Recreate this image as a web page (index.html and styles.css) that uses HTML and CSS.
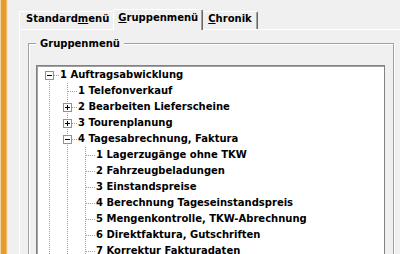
FILE: index.html
```html
<!DOCTYPE html>
<html lang="de">
<head>
  <meta charset="UTF-8">
  <title>Gruppenmenü</title>
  <link rel="stylesheet" href="styles.css">
</head>
<body>
  <div class="app">
    <div class="edge"></div>

    <div class="main">
      <div class="tabs">
        <div class="tab">Standard<u>m</u>enü</div>
        <div class="tab active"><u>G</u>ruppenmenü</div>
        <div class="tab"><u>C</u>hronik</div>
      </div>

      <div class="panel">
        <fieldset class="group">
          <legend>Gruppenmenü</legend>

          <div class="list">
            <div class="row">
              <span class="g root">
                <svg class="box" width="9" height="9" viewBox="0 0 9 9"><rect x=".5" y=".5" width="8" height="8" fill="#fff" stroke="#919191"/><path d="M2 4.5h5" stroke="#000"/></svg>
              </span>
              <span class="label">1 Auftragsabwicklung</span>
            </div>
            <div class="row">
              <span class="g pipe"></span><span class="g tee"></span>
              <span class="label">1 Telefonverkauf</span>
            </div>
            <div class="row">
              <span class="g pipe"></span>
              <span class="g tee">
                <svg class="box" width="9" height="9" viewBox="0 0 9 9"><rect x=".5" y=".5" width="8" height="8" fill="#fff" stroke="#919191"/><path d="M2 4.5h5M4.5 2v5" stroke="#000"/></svg>
              </span>
              <span class="label">2 Bearbeiten Lieferscheine</span>
            </div>
            <div class="row">
              <span class="g pipe"></span>
              <span class="g tee">
                <svg class="box" width="9" height="9" viewBox="0 0 9 9"><rect x=".5" y=".5" width="8" height="8" fill="#fff" stroke="#919191"/><path d="M2 4.5h5M4.5 2v5" stroke="#000"/></svg>
              </span>
              <span class="label">3 Tourenplanung</span>
            </div>
            <div class="row">
              <span class="g pipe"></span>
              <span class="g tee">
                <svg class="box" width="9" height="9" viewBox="0 0 9 9"><rect x=".5" y=".5" width="8" height="8" fill="#fff" stroke="#919191"/><path d="M2 4.5h5" stroke="#000"/></svg>
              </span>
              <span class="label">4 Tagesabrechnung, Faktura</span>
            </div>
            <div class="row">
              <span class="g pipe"></span><span class="g pipe"></span><span class="g tee"></span>
              <span class="label">1 Lagerzugänge ohne TKW</span>
            </div>
            <div class="row">
              <span class="g pipe"></span><span class="g pipe"></span><span class="g tee"></span>
              <span class="label">2 Fahrzeugbeladungen</span>
            </div>
            <div class="row">
              <span class="g pipe"></span><span class="g pipe"></span><span class="g tee"></span>
              <span class="label">3 Einstandspreise</span>
            </div>
            <div class="row">
              <span class="g pipe"></span><span class="g pipe"></span><span class="g tee"></span>
              <span class="label">4 Berechnung Tageseinstandspreis</span>
            </div>
            <div class="row">
              <span class="g pipe"></span><span class="g pipe"></span><span class="g tee"></span>
              <span class="label">5 Mengenkontrolle, TKW-Abrechnung</span>
            </div>
            <div class="row">
              <span class="g pipe"></span><span class="g pipe"></span><span class="g tee"></span>
              <span class="label">6 Direktfaktura, Gutschriften</span>
            </div>
            <div class="row">
              <span class="g pipe"></span><span class="g pipe"></span><span class="g tee"></span>
              <span class="label">7 Korrektur Fakturadaten</span>
            </div>
          </div>
        </fieldset>
      </div>
    </div>
  </div>
</body>
</html>
```

FILE: styles.css
```css
* {
  box-sizing: border-box;
}

body {
  margin: 0;
  background: #f0f0f0;
  font-family: "DejaVu Sans", sans-serif;
  font-size: 10px;
  font-weight: bold;
  color: #000;
  overflow: hidden;
}

.app {
  display: flex;
  height: 254px;
}

/* orange window edge on the left */
.edge {
  flex: none;
  width: 8px;
  background: linear-gradient(to right, #f1d3a2 0 1px, #e69b2e 1px 6px, #f0bb66 6px 7px, #f7e3c4 7px 8px);
}

.main {
  flex: none;
  width: 400px;
  padding: 9px 0 0 11px;
}

/* Tabs */
.tabs {
  display: flex;
  align-items: flex-end;
  height: 20px;
}

.tab {
  height: 18px;
  padding: 0 5px 0 6px;
  line-height: 14px;
  white-space: nowrap;
  background: #f0f0f0;
  border-top: 1px solid #fff;
  border-left: 1px solid #fff;
  border-right: 1px solid #696969;
  border-radius: 2px 2px 0 0;
  box-shadow: inset -1px 0 #a0a0a0;
}

.tab.active {
  position: relative;
  z-index: 1;
  height: 21px;
  margin: 0 -2px -1px;
  padding: 1px 4px 0;
}

.panel {
  width: 390px;
  height: 240px;
  padding: 7px 0 0 8px;
  border-top: 1px solid #fff;
  border-left: 1px solid #fff;
}

/* Group box */
.group {
  width: 366px;
  height: 260px;
  min-width: 0;
  margin: 0;
  padding: 15px 8px 0 7px;
  border: 1px solid #a0a0a0;
  box-shadow: inset 1px 1px #fff, 1px 1px #fff;
}

.group legend {
  padding: 0 4px;
  line-height: 13px;
  background: #f0f0f0;
}

/* Tree list */
.list {
  height: 240px;
  padding: 1px 0 0 4px;
  background: #fff;
  border: 1px solid #828282;
  box-shadow: inset 1px 1px #a0a0a0;
}

.row {
  display: flex;
  height: 16px;
  line-height: 16px;
  white-space: nowrap;
}

.label {
  padding-left: 1px;
}

/* guide cells with dotted connector lines */
.g {
  flex: none;
  width: 18px;
  height: 16px;
  padding: 4px 0 0 4px;
  background-repeat: no-repeat;
}

.box {
  display: block;
}

.pipe {
  background-image: repeating-linear-gradient(to bottom, #a0a0a0 0 1px, transparent 1px 2px);
  background-position: 8px 0;
  background-size: 1px 16px;
}

.tee {
  background-image:
    repeating-linear-gradient(to bottom, #a0a0a0 0 1px, transparent 1px 2px),
    repeating-linear-gradient(to right, #a0a0a0 0 1px, transparent 1px 2px);
  background-position: 8px 0, 9px 8px;
  background-size: 1px 16px, 9px 1px;
}

.root {
  background-image:
    repeating-linear-gradient(to bottom, #a0a0a0 0 1px, transparent 1px 2px),
    repeating-linear-gradient(to right, #a0a0a0 0 1px, transparent 1px 2px);
  background-position: 8px 8px, 9px 8px;
  background-size: 1px 8px, 9px 1px;
}
```
